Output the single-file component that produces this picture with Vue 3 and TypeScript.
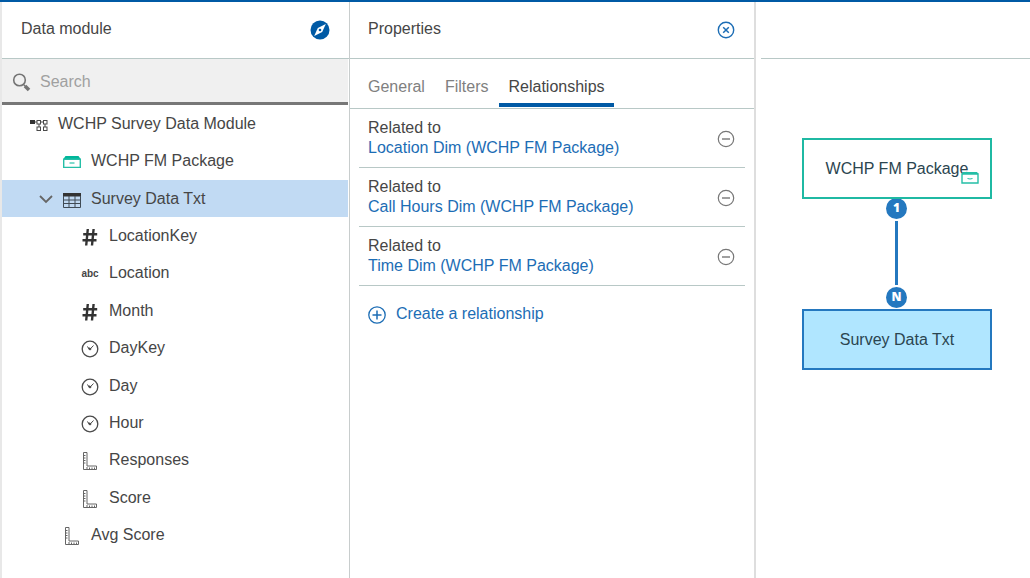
<script setup lang="ts">
import { ref } from 'vue'

type IconName = 'module' | 'package' | 'table' | 'number' | 'text' | 'time' | 'measure'

interface TreeItem {
  label: string
  icon: IconName
  level: number
  expandable?: boolean
}

const items: TreeItem[] = [
  { label: 'WCHP Survey Data Module', icon: 'module', level: 0 },
  { label: 'WCHP FM Package', icon: 'package', level: 1 },
  { label: 'Survey Data Txt', icon: 'table', level: 1, expandable: true },
  { label: 'LocationKey', icon: 'number', level: 2 },
  { label: 'Location', icon: 'text', level: 2 },
  { label: 'Month', icon: 'number', level: 2 },
  { label: 'DayKey', icon: 'time', level: 2 },
  { label: 'Day', icon: 'time', level: 2 },
  { label: 'Hour', icon: 'time', level: 2 },
  { label: 'Responses', icon: 'measure', level: 2 },
  { label: 'Score', icon: 'measure', level: 2 },
  { label: 'Avg Score', icon: 'measure', level: 1 },
]

const tabs = ['General', 'Filters', 'Relationships']
const relationships = [
  'Location Dim (WCHP FM Package)',
  'Call Hours Dim (WCHP FM Package)',
  'Time Dim (WCHP FM Package)',
]

const search = ref('')
const selected = ref('Survey Data Txt')
const activeTab = ref('Relationships')
</script>

<template>
  <div class="app">
    <aside class="sidebar">
      <header class="head">
        <h1 class="title">Data module</h1>
        <button class="icon-button" type="button" aria-label="Explore">
          <svg width="20" height="20" viewBox="0 0 20 20">
            <circle cx="10" cy="10" r="9.5" fill="#005aa5" />
            <path d="M15.8 4 12.2 12 4.2 16 7.8 8z" fill="#fff" />
            <circle cx="10" cy="10" r="1.3" fill="#005aa5" />
          </svg>
        </button>
      </header>
      <label class="search">
        <svg width="20" height="20" viewBox="0 0 20 20" fill="none" stroke="#747474">
          <circle cx="7.5" cy="8" r="5.8" stroke-width="1.6" />
          <path d="M11.500 12.500 13.500 14.500" stroke-width="1.4" />
          <path d="M13 14 17 18" stroke-width="3.6" />
        </svg>
        <input v-model="search" type="text" placeholder="Search" aria-label="Search" />
      </label>
      <ul class="tree">
        <li v-for="item in items" :key="item.label">
          <button
            type="button"
            class="row"
            :class="['level-' + item.level, { selected: selected === item.label }]"
            @click="selected = item.label"
          >
            <span class="twisty">
              <svg v-if="item.expandable" width="14" height="9" viewBox="0 0 14 9">
                <path d="M1 1 7 7 13 1" fill="none" stroke="#666" stroke-width="1.8" />
              </svg>
            </span>
            <span class="icon">
              <svg v-if="item.icon === 'module'" width="18" height="18" viewBox="0 0 18 18" fill="none" stroke="#4a4a4a">
                <rect x="0" y="4" width="5" height="4" fill="#333" stroke="none" />
                <path d="M5 6h2M11 6h2.500M9 8v3M15 8v3" />
                <rect x="7" y="4.500" width="3.500" height="3.500" />
                <rect x="13.500" y="4.500" width="3.500" height="3.500" />
                <rect x="7" y="11" width="3.500" height="3.500" />
                <rect x="13.500" y="11" width="3.500" height="3.500" />
              </svg>
              <svg v-else-if="item.icon === 'package'" width="18" height="18" viewBox="0 0 18 18">
                <path d="M2.500 3h13l2.500 3.500H0z" fill="#00b69a" />
                <path d="M.7 6.200h16.600v8.200H.7z" fill="#fff" stroke="#25bfa7" stroke-width="1.400" />
                <path d="M6.500 10h5" stroke="#00b69a" />
              </svg>
              <svg v-else-if="item.icon === 'table'" width="18" height="18" viewBox="0 0 18 18" fill="none" stroke="#404b55">
                <path d="M0 2h18v3.500H0z" fill="#333" stroke="none" />
                <path d="M.5 5v11.500h17V5M.5 9h17M.5 12.500h17M6 5v11.500M12 5v11.500" />
              </svg>
              <svg v-else-if="item.icon === 'number'" width="18" height="18" viewBox="0 0 18 18">
                <path d="M6.800 1 5.200 17.500M12.600 1 11 17.500M2.200 6.300h14M1.500 12.200h14" fill="none" stroke="#333" stroke-width="2.400" />
              </svg>
              <span v-else-if="item.icon === 'text'" class="abc">abc</span>
              <svg v-else-if="item.icon === 'time'" width="18" height="18" viewBox="0 0 18 18" fill="none" stroke="#4a4a4a">
                <circle cx="9" cy="9" r="7.800" stroke-width="1.300" />
                <path d="M6 6.500 9 9.200 12.500 5.500" />
                <path d="M7.500 8 9 9.300l1-1" stroke-width="1.800" />
              </svg>
              <svg v-else width="18" height="18" viewBox="0 0 18 18" fill="none" stroke="#666">
                <path d="M2.500 .5h3.500V14h9.500v3.500h-13z" />
                <path d="M2.500 3.500H4.500M2.500 6H4.500M2.500 8.500H4.500M2.500 11H4.500M6 15v2.500M8.500 15.500v2M11 15.500v2M13.500 15.500v2" />
              </svg>
            </span>
            <span class="label">{{ item.label }}</span>
          </button>
        </li>
      </ul>
    </aside>

    <section class="properties">
      <header class="head">
        <h2 class="title">Properties</h2>
        <button class="icon-button" type="button" aria-label="Close">
          <svg width="18" height="18" viewBox="0 0 18 18" fill="none" stroke="#1c6db5">
            <circle cx="9" cy="9" r="7.700" stroke-width="1.400" />
            <path d="M6.200 6.200l5.600 5.600M11.800 6.200l-5.600 5.600" stroke-width="1.500" />
          </svg>
        </button>
      </header>
      <nav class="tabs" role="tablist">
        <button
          v-for="tab in tabs"
          :key="tab"
          type="button"
          role="tab"
          class="tab"
          :class="{ active: activeTab === tab }"
          :aria-selected="activeTab === tab"
          @click="activeTab = tab"
        >
          {{ tab }}
        </button>
      </nav>
      <ul class="relations">
        <li v-for="name in relationships" :key="name" class="relation">
          <div class="relation-text">
            <span>Related to</span>
            <a href="#">{{ name }}</a>
          </div>
          <button class="icon-button" type="button" :aria-label="'Remove ' + name">
            <svg width="18" height="18" viewBox="0 0 18 18" fill="none" stroke="#777">
              <circle cx="9" cy="9" r="7.700" stroke-width="1.200" />
              <path d="M5 9h8" stroke-width="1.400" />
            </svg>
          </button>
        </li>
      </ul>
      <button class="create" type="button">
        <svg width="18" height="18" viewBox="0 0 18 18" fill="none" stroke="#1c6db5">
          <circle cx="9" cy="9" r="8.200" stroke-width="1.300" />
          <path d="M4.500 9h9M9 4.500v9" stroke-width="1.500" />
        </svg>
        Create a relationship
      </button>
    </section>

    <main class="canvas">
      <div class="canvas-head"></div>
      <div class="diagram">
        <span class="link"></span>
        <span class="badge one">1</span>
        <span class="badge many">N</span>
        <button class="node package" type="button">
          WCHP FM Package
          <svg class="node-icon" width="18" height="14" viewBox="0 0 18 14" fill="none" stroke="#25bfa7">
            <path d="M2 1h14l1.500 2H.5z" fill="#25bfa7" stroke="none" />
            <path d="M1 3h16v9H1z" stroke-width="1.400" />
            <path d="M6.500 7.500q2.500 1 5 0" />
          </svg>
        </button>
        <button class="node survey" type="button">Survey Data Txt</button>
      </div>
    </main>
  </div>
</template>

<style>
body {
  margin: 0;
  background: #fff;
}
</style>

<style scoped>
.app {
  display: grid;
  grid-template-columns: 175fr 203fr 137fr;
  min-height: 100vh;
  box-sizing: border-box;
  border-top: 2px solid #005aa5;
  font-family: "Liberation Sans", Arial, sans-serif;
  font-size: 16px;
  line-height: 20px;
  color: #464646;
}

button {
  margin: 0;
  padding: 0;
  border: 0;
  background: none;
  font: inherit;
  color: inherit;
  text-align: left;
  cursor: pointer;
}

svg {
  display: block;
  flex: none;
}

ul {
  list-style: none;
  margin: 0;
  padding: 0;
}

.sidebar {
  display: flex;
  flex-direction: column;
  min-width: 0;
  border-left: 2px solid #e8e8e8;
  border-right: 1px solid #c8cdcd;
}

.head {
  display: flex;
  align-items: center;
  justify-content: space-between;
  height: 56px;
  padding: 0 19px;
  border-bottom: 1px solid #b8c8c6;
}

.title {
  margin: 0;
  padding-bottom: 2px;
  font-size: 16px;
  font-weight: 400;
}

.search {
  display: flex;
  align-items: center;
  gap: 8px;
  height: 41px;
  margin-right: 1px;
  padding: 2px 10px 0;
  background: #f0f0f0;
  border-bottom: 3px solid #777;
}

.search input {
  flex: 1;
  min-width: 0;
  padding: 0;
  border: 0;
  outline: 0;
  background: none;
  font: inherit;
  color: #464646;
}

.search input::placeholder {
  color: #a0a0a0;
  opacity: 1;
}

.tree {
  flex: 1;
  display: grid;
  grid-auto-rows: minmax(36px, 1fr);
  margin-right: 1px;
  padding-bottom: 24px;
}

.row {
  display: flex;
  align-items: center;
  width: 100%;
  height: 100%;
  box-sizing: border-box;
}

.row.selected {
  background: #c1daf3;
}

.level-0 {
  padding-left: 4px;
}

.level-1 {
  padding-left: 37px;
}

.level-2 {
  padding-left: 55px;
}

.twisty {
  width: 24px;
  padding-top: 2px;
  flex: none;
}

.icon {
  display: flex;
  justify-content: center;
  width: 18px;
  margin-right: 10px;
  padding-top: 2px;
  flex: none;
}

.abc {
  font-size: 10px;
  font-weight: 700;
  line-height: 12px;
}

.label {
  white-space: nowrap;
}

.properties {
  min-width: 0;
  border-right: 2px solid #dedede;
}

.properties .head {
  padding: 0 19px 0 18px;
}

.tabs {
  display: flex;
  gap: 2px;
  height: 49px;
  padding-left: 9px;
  border-bottom: 1px solid #b8c8c6;
}

.tab {
  height: 48px;
  box-sizing: border-box;
  padding: 12px 9px 0;
  border-bottom: 4px solid transparent;
  color: #808080;
}

.tab.active {
  color: #464646;
  border-bottom-color: #005aa5;
}

.relations {
  margin: 0 9px;
}

.relation {
  display: flex;
  align-items: center;
  justify-content: space-between;
  height: 58px;
  padding: 0 10px 0 9px;
  border-bottom: 1px solid #b8c8c6;
}

.relation .icon-button {
  padding-top: 2px;
}

.relation-text {
  display: flex;
  flex-direction: column;
}

a,
.create {
  color: #1c6db5;
  text-decoration: none;
}

.create {
  display: flex;
  align-items: center;
  gap: 10px;
  margin: 18px 18px 0;
}

.create svg {
  padding-top: 2px;
}

.canvas {
  min-width: 0;
}

.canvas-head {
  height: 56px;
  margin-left: 5px;
  border-bottom: 1px solid #b8c8c6;
}

.diagram {
  position: relative;
}

.node {
  position: absolute;
  left: 46px;
  display: flex;
  align-items: center;
  justify-content: center;
  width: 190px;
  height: 61px;
  box-sizing: border-box;
  border: 2px solid #1fb9a3;
  background: #fff;
  color: #2b4550;
  white-space: nowrap;
}

.package {
  top: 79px;
}

.survey {
  top: 250px;
  border-color: #2478bf;
  background: #b0e6ff;
}

.node-icon {
  position: absolute;
  right: 11px;
  bottom: 12px;
}

.link {
  position: absolute;
  left: 139px;
  top: 162px;
  width: 3px;
  height: 64px;
  background: #2478bf;
}

.badge {
  position: absolute;
  left: 130px;
  width: 21px;
  height: 21px;
  border-radius: 50%;
  background: #2478bf;
  color: #fff;
  font-family: "Open Sans", sans-serif;
  font-size: 12px;
  font-weight: 800;
  line-height: 20px;
  text-align: center;
}

.one {
  top: 139px;
}

.many {
  top: 228px;
}
</style>
